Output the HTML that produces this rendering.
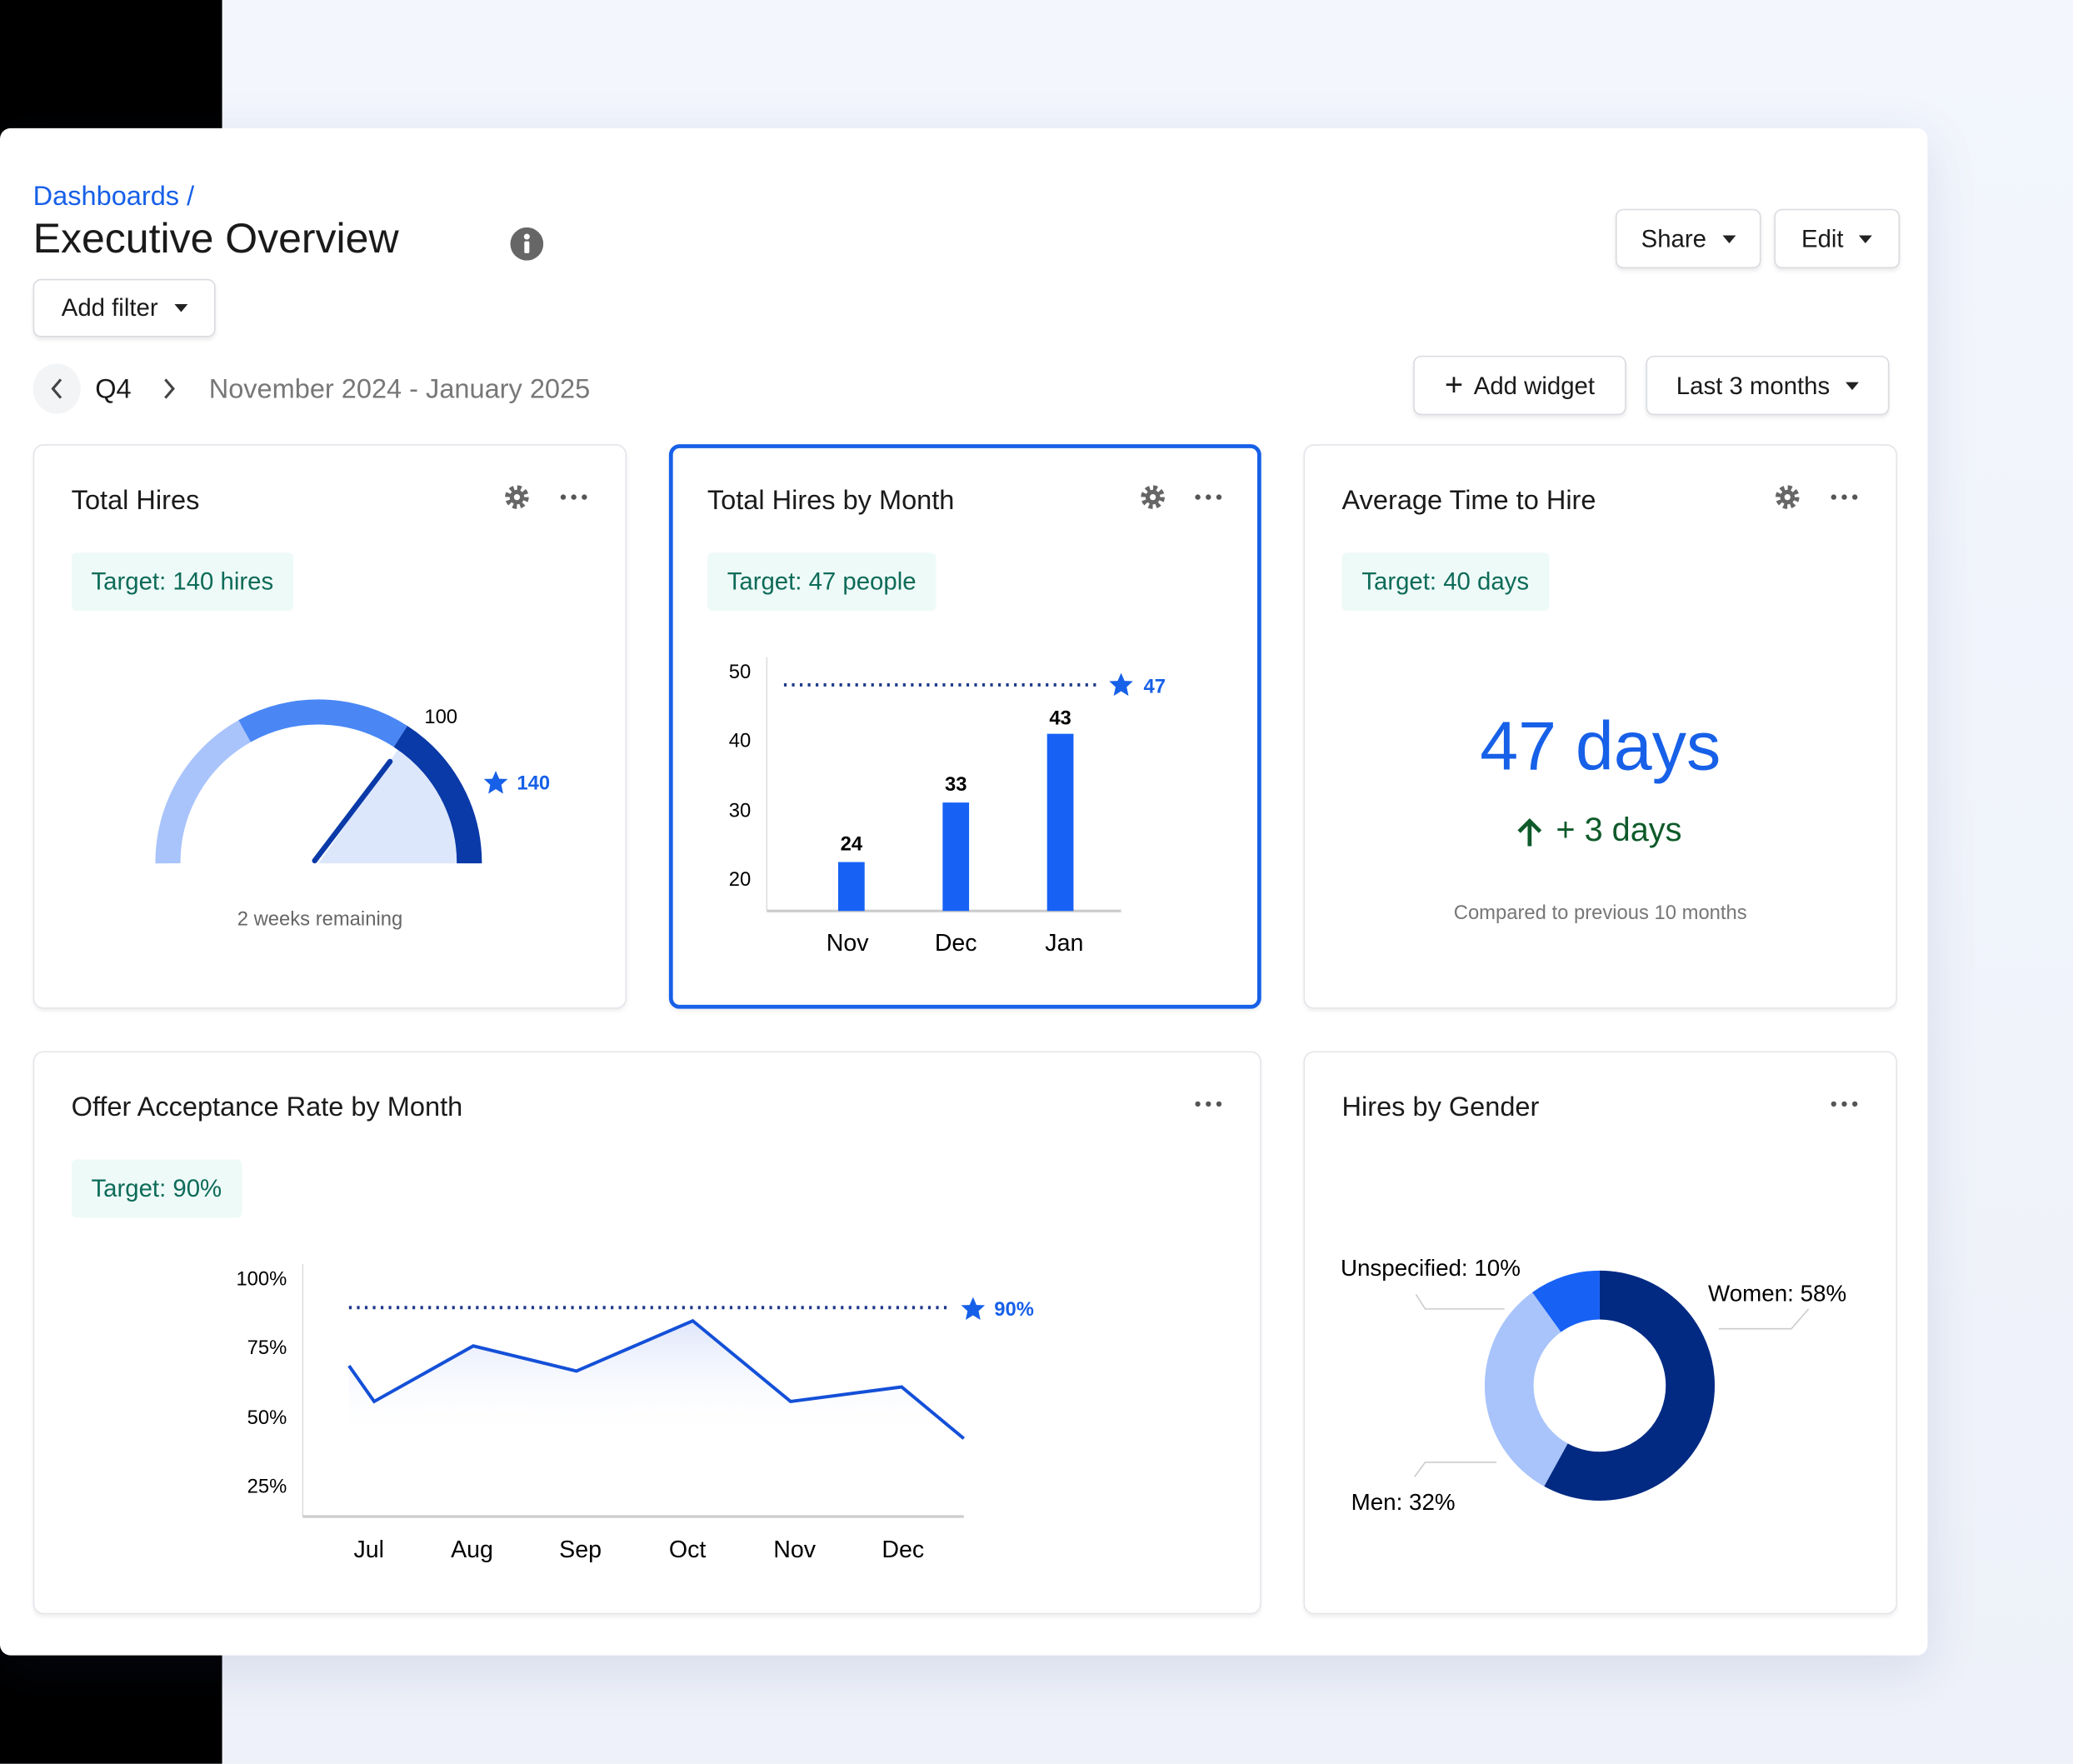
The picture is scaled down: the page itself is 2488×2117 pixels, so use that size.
<!DOCTYPE html>
<html><head><meta charset="utf-8"><style>
*{margin:0;padding:0;box-sizing:border-box}
html,body{width:2488px;height:2116px;overflow:hidden;background:#f3f6fd}
#s{position:absolute;left:0;top:0;width:1568px;height:1334px;transform:scale(1.58673);transform-origin:0 0;font-family:"Liberation Sans",sans-serif;color:#1a1a1a;background:linear-gradient(#f3f6fd,#eef1f9)}
.a{position:absolute}
.blk{left:0;top:0;width:168px;height:1334px;background:#000}
.panel{left:0;top:97px;width:1458px;height:1155px;background:#fff;border-radius:8px;box-shadow:0 10px 40px rgba(40,60,120,.12)}
.btn{position:absolute;border:1px solid #d9dbe0;border-radius:6px;background:#fff;box-shadow:0 2px 3px rgba(0,0,0,.08);font-size:18.5px;display:flex;align-items:center;justify-content:center;gap:8px}
.car{display:inline-block;width:0;height:0;border-left:5px solid transparent;border-right:5px solid transparent;border-top:6px solid #222;margin-left:4px}
.card{position:absolute;border:1px solid #e3e5ea;border-radius:8px;background:#fff;box-shadow:0 2px 3px rgba(0,0,0,.06)}
.ct{position:absolute;left:28px;top:30px;font-size:20.5px}
.tag{position:absolute;left:28px;top:81px;height:44px;padding:0 15px;background:#eefaf8;color:#0d6b58;font-size:18.5px;line-height:44px;border-radius:4px}
.lab{position:absolute;font-size:16px}
</style></head><body><div id="s">
<div class="a blk"></div>
<div class="a panel"></div>
<div class="a" style="left:25px;top:137px;font-size:20.5px;color:#1760e8">Dashboards /</div>
<div class="a" style="left:25px;top:162px;font-size:31.5px;color:#1a1a1a">Executive Overview</div>
<svg class="a" style="left:386px;top:172px" width="25" height="25"><circle cx="12.5" cy="12.5" r="12.5" fill="#666"/><circle cx="12.5" cy="7" r="2.2" fill="#fff"/><rect x="10.6" y="10.5" width="3.8" height="9" rx="1" fill="#fff"/></svg>
<div class="btn" style="left:25px;top:211px;width:138px;height:44px">Add filter<span class="car"></span></div>
<div class="btn" style="left:1222px;top:158px;width:110px;height:45px">Share<span class="car"></span></div>
<div class="btn" style="left:1342px;top:158px;width:95px;height:45px">Edit<span class="car"></span></div>
<div class="btn" style="left:1069px;top:269px;width:161px;height:45px"><span style="font-size:24px;font-weight:300">+</span>Add widget</div>
<div class="btn" style="left:1245px;top:269px;width:184px;height:45px">Last 3 months<span class="car"></span></div>
<div class="a" style="left:25px;top:275px;width:36px;height:38px;border-radius:50%;background:#f3f4f6"></div>
<svg class="a" style="left:35px;top:284px" width="16" height="20"><path d="M11 3 L5 10 L11 17" stroke="#444" stroke-width="2" fill="none"/></svg>
<div class="a" style="left:72px;top:283px;font-size:20.5px">Q4</div>
<svg class="a" style="left:120px;top:284px" width="16" height="20"><path d="M5 3 L11 10 L5 17" stroke="#444" stroke-width="2" fill="none"/></svg>
<div class="a" style="left:158px;top:283px;font-size:20.5px;color:#777">November 2024 - January 2025</div>

<div class="card" style="left:25px;top:336px;width:449px;height:427px"><div class="ct">Total Hires</div><div class="tag">Target: 140 hires</div></div>
<div class="card" style="left:506px;top:336px;width:448px;height:427px;border:3px solid #1760e8"><div class="ct" style="left:26px;top:28px">Total Hires by Month</div><div class="tag" style="left:26px;top:79px">Target: 47 people</div></div>
<div class="card" style="left:986px;top:336px;width:449px;height:427px"><div class="ct">Average Time to Hire</div><div class="tag">Target: 40 days</div></div>
<div class="card" style="left:25px;top:795px;width:929px;height:426px"><div class="ct">Offer Acceptance Rate by Month</div><div class="tag">Target: 90%</div></div>
<div class="card" style="left:986px;top:795px;width:449px;height:426px"><div class="ct">Hires by Gender</div></div>

<div class="a" style="left:986px;top:535px;width:449px;text-align:center;font-size:52px;color:#1760e8">47 days</div>
<div class="a" style="left:1000px;top:614px;width:449px;text-align:center;font-size:25px;color:#0e5a2a">+ 3 days</div>
<svg class="a" style="left:1146px;top:618px" width="22" height="24"><path d="M11 22 V4 M3 11 L11 3 L19 11" stroke="#0e5a2a" stroke-width="3" fill="none"/></svg>
<div class="a" style="left:986px;top:682px;width:449px;text-align:center;font-size:15px;color:#777">Compared to previous 10 months</div>
<div class="a" style="left:25px;top:687px;width:434px;text-align:center;font-size:15px;color:#666">2 weeks remaining</div>

<svg class="a" style="left:0;top:0" width="1568" height="1334" font-family="Liberation Sans, sans-serif">
<defs><g id="gear"><circle r="7" fill="none" stroke="#666" stroke-width="4" stroke-dasharray="3 2.5"/><circle r="5.5" fill="#666"/><circle r="2.3" fill="#fff"/></g>
<g id="dots" fill="#555"><circle cx="-8" r="2"/><circle r="2"/><circle cx="8" r="2"/></g>
<path id="star" d="M0 -9 L2.6 -3 L9 -2.8 L4.2 1.6 L5.6 8.3 L0 4.8 L-5.6 8.3 L-4.2 1.6 L-9 -2.8 L-2.6 -3Z" fill="#1760e8"/>
<linearGradient id="lg" x1="0" y1="0" x2="0" y2="1"><stop offset="0" stop-color="#dfe6fb"/><stop offset="1" stop-color="#fff" stop-opacity="0"/></linearGradient></defs>
<use href="#gear" x="391" y="376"/><use href="#gear" x="872" y="376"/><use href="#gear" x="1352" y="376"/>
<use href="#dots" x="434" y="376"/><use href="#dots" x="914" y="376"/><use href="#dots" x="1395" y="376"/>
<use href="#dots" x="914" y="835"/><use href="#dots" x="1395" y="835"/>
<!-- gauge -->
<path d="M241 653 L301 567 A105 105 0 0 1 346 653 Z" fill="#dde7fb"/>
<path d="M127 653 A114 114 0 0 1 185 553" stroke="#a9c4fb" stroke-width="19" fill="none"/>
<path d="M185 553 A114 114 0 0 1 303 557" stroke="#4a87f5" stroke-width="19" fill="none"/>
<path d="M303 557 A114 114 0 0 1 355 653" stroke="#0a3aa8" stroke-width="19" fill="none"/>
<line x1="238" y1="651" x2="295" y2="576" stroke="#0a3aa8" stroke-width="4" stroke-linecap="round"/>
<text x="321" y="547" font-size="15">100</text>
<use href="#star" x="375" y="592"/><text x="391" y="597" font-size="15" fill="#1760e8" font-weight="bold">140</text>
<!-- bars -->
<g font-size="15" text-anchor="end"><text x="568" y="513">50</text><text x="568" y="565">40</text><text x="568" y="618">30</text><text x="568" y="670">20</text></g>
<line x1="580" y1="497" x2="580" y2="689" stroke="#ddd"/><line x1="580" y1="689" x2="848" y2="689" stroke="#ccc" stroke-width="2"/>
<line x1="593" y1="518" x2="832" y2="518" stroke="#1e3a8a" stroke-width="2.5" stroke-dasharray="2 4"/>
<use href="#star" x="848" y="518"/><text x="865" y="524" font-size="15" fill="#1760e8" font-weight="bold">47</text>
<rect x="634" y="652" width="20" height="37" fill="#1762f5"/><rect x="713" y="607" width="20" height="82" fill="#1762f5"/><rect x="792" y="555" width="20" height="134" fill="#1762f5"/>
<g font-size="15" font-weight="bold" text-anchor="middle"><text x="644" y="643">24</text><text x="723" y="598">33</text><text x="802" y="548">43</text></g>
<g font-size="18" text-anchor="middle"><text x="641" y="719">Nov</text><text x="723" y="719">Dec</text><text x="805" y="719">Jan</text></g>
<!-- line -->
<g font-size="15" text-anchor="end"><text x="217" y="972">100%</text><text x="217" y="1024">75%</text><text x="217" y="1077">50%</text><text x="217" y="1129">25%</text></g>
<line x1="229" y1="956" x2="229" y2="1147" stroke="#ddd"/><line x1="229" y1="1147" x2="729" y2="1147" stroke="#ccc" stroke-width="2"/>
<path d="M264 1033 L283 1060 L358 1018 L436 1037 L524 999 L598 1060 L682 1049 L729 1088 L729 1085 L264 1085Z" fill="url(#lg)"/>
<path d="M264 1033 L283 1060 L358 1018 L436 1037 L524 999 L598 1060 L682 1049 L729 1088" stroke="#1450d8" stroke-width="2.5" fill="none"/>
<line x1="264" y1="989" x2="720" y2="989" stroke="#1e3a8a" stroke-width="2.5" stroke-dasharray="2 4"/>
<use href="#star" x="736" y="990"/><text x="752" y="995" font-size="15" fill="#1760e8" font-weight="bold">90%</text>
<g font-size="18" text-anchor="middle"><text x="279" y="1178">Jul</text><text x="357" y="1178">Aug</text><text x="439" y="1178">Sep</text><text x="520" y="1178">Oct</text><text x="601" y="1178">Nov</text><text x="683" y="1178">Dec</text></g>
<!-- donut r=68.5 sw=37 circ=430.4 -->
<g transform="rotate(-90 1210 1048)" fill="none" stroke-width="37">
<circle cx="1210" cy="1048" r="68.5" stroke="#a9c4fb"/>
<circle cx="1210" cy="1048" r="68.5" stroke="#032a82" stroke-dasharray="249.6 500"/>
<circle cx="1210" cy="1048" r="68.5" stroke="#1762f5" stroke-dasharray="43 500" stroke-dashoffset="-387.4"/>
</g>
<g stroke="#ccc" fill="none"><path d="M1071 979 L1078 990 L1138 990"/><path d="M1368 990 L1355 1005 L1300 1005"/><path d="M1070 1117 L1078 1106 L1132 1106"/></g>
<g font-size="17.5"><text x="1014" y="965">Unspecified: 10%</text><text x="1292" y="984">Women: 58%</text><text x="1022" y="1142">Men: 32%</text></g>
</svg>
</div></body></html>
